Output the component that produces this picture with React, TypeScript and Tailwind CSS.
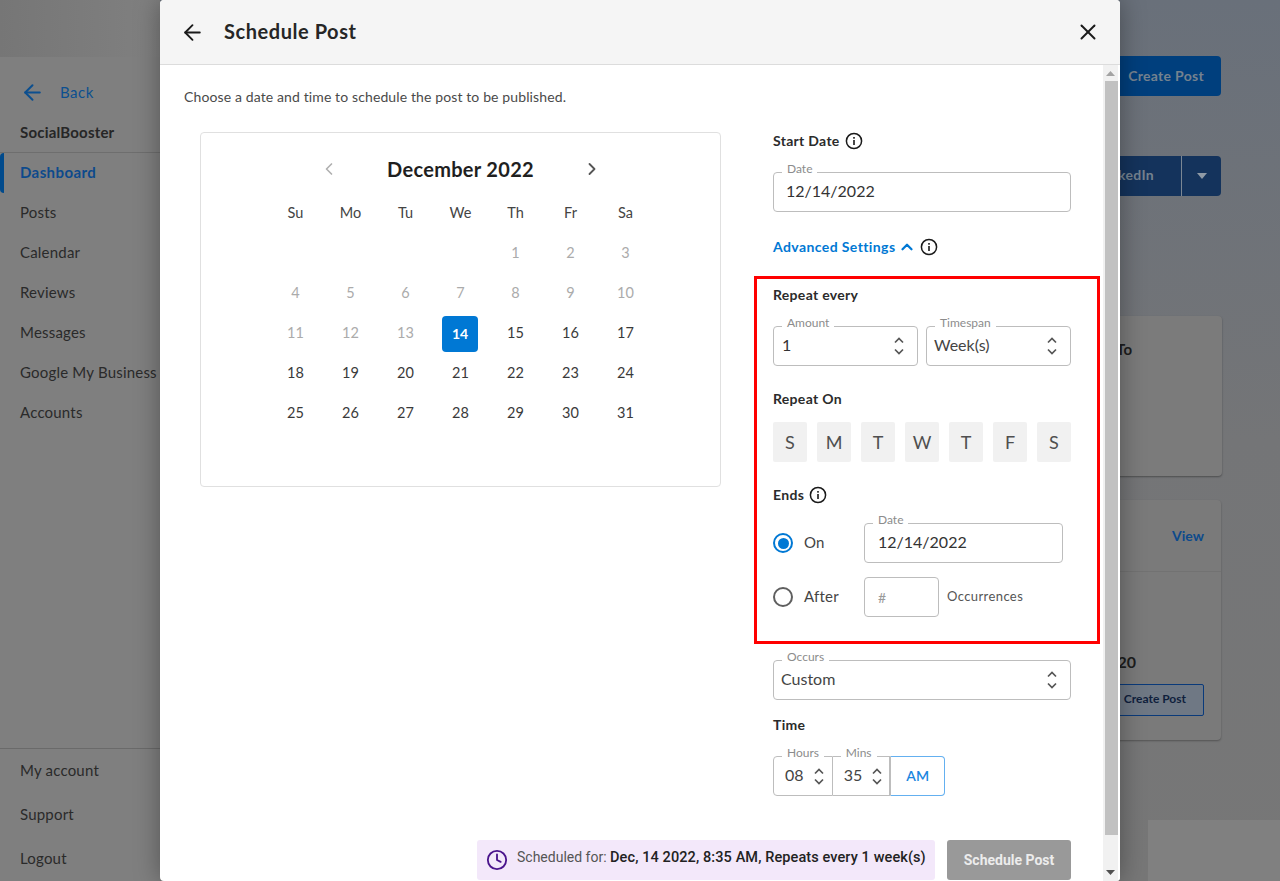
import React from "react";
import { ArrowLeft, X, ChevronLeft, ChevronRight, ChevronUp, Clock } from "lucide-react";

const nav = ["Dashboard", "Posts", "Calendar", "Reviews", "Messages", "Google My Business", "Accounts"];
const weekdays = ["Su", "Mo", "Tu", "We", "Th", "Fr", "Sa"];
const days: (number | null)[] = [null, null, null, null, 1, 2, 3, 4, 5, 6, 7, 8, 9, 10, 11, 12, 13, 14, 15, 16, 17, 18, 19, 20, 21, 22, 23, 24, 25, 26, 27, 28, 29, 30, 31];

function Info() {
  return (
    <svg width="18" height="18" viewBox="0 0 18 18" fill="none" className="shrink-0">
      <circle cx="9" cy="9" r="7.6" stroke="#1a1a1a" strokeWidth="1.5" />
      <rect x="8.2" y="8" width="1.6" height="5" fill="#1a1a1a" />
      <rect x="8.2" y="5" width="1.6" height="1.7" fill="#1a1a1a" />
    </svg>
  );
}

function UpDown({ gap = 5 }: { gap?: number }) {
  return (
    <svg width="12" height={15 + gap} viewBox={`0 0 12 ${15 + gap}`} fill="none" className="shrink-0">
      <path d="M2 6.5 L6 2.5 L10 6.5" stroke="#555" strokeWidth="1.7" />
      <path d={`M2 ${8.5 + gap} L6 ${12.5 + gap} L10 ${8.5 + gap}`} stroke="#555" strokeWidth="1.7" />
    </svg>
  );
}

function Field({ label, children, className = "" }: { label?: string; children: React.ReactNode; className?: string }) {
  return (
    <div className={`relative h-[40px] border border-[#bdbdbd] rounded-[4px] flex items-center bg-white ${className}`}>
      {label && (
        <span className="absolute left-[8px] top-[-11px] bg-white px-[5px] text-[12px] leading-[14px] text-[#8c8c8c]">{label}</span>
      )}
      <span className="contents">{children}</span>
    </div>
  );
}

function Val({ children }: { children: React.ReactNode }) {
  return <span className="pb-[2px]">{children}</span>;
}

function Heading({ text, info = false, className = "" }: { text: string; info?: boolean; className?: string }) {
  return (
    <div className={`h-[18px] flex items-center gap-[5px] text-[14px] tracking-[0.3px] font-bold text-[#2b2b2b] ${className}`}>
      <span className="pb-[2px]">{text}</span>
      {info && <Info />}
    </div>
  );
}

function Background() {
  return (
    <div className="absolute inset-0 flex bg-gradient-to-b from-[#69707a] via-[#747577] to-[#777777]">
      <aside className="w-[160px] shrink-0 h-full flex flex-col bg-[#7f7f7f] text-[15px] tracking-[0.2px] text-[#2a2a2a] overflow-hidden">
        <div className="h-[57px] bg-gradient-to-r from-[#767676] to-[#808080]" />
        <div className="mt-[25px] h-[20px] flex items-center pl-[20px] text-[#0c4f8f]">
          <ArrowLeft size={25} strokeWidth={1.9} className="mr-[15px] shrink-0" />
          <span className="tracking-[0.5px]">Back</span>
        </div>
        <div className="mt-[21px] h-[20px] pl-[20px] pb-[2px] font-bold text-[#262626] flex items-center">SocialBooster</div>
        <div className="mt-[9px] h-px bg-[#6e6e6e]" />
        {nav.map((n, i) => (
          <div key={n} className={`h-[40px] shrink-0 flex items-center pb-[2px] whitespace-nowrap ${i === 0 ? "font-bold text-[#0d4a8c] border-l-[4px] border-[#004a8c] rounded-l-[4px] pl-[16px] tracking-[0.4px]" : "pl-[20px]"}`}>
            {n}
          </div>
        ))}
        <div className="mt-auto h-px bg-[#6a6a6a]" />
        <div className="h-[132px] flex flex-col">
          {["My account", "Support", "Logout"].map((n) => (
            <div key={n} className="h-[44px] flex items-center pl-[20px] pb-[2px]">{n}</div>
          ))}
        </div>
      </aside>
      <main className="flex-1 relative flex flex-col items-end pr-[59px]">
        <div className="mt-[56px] h-[40px] w-[221px] rounded-[4px] bg-[#003f7d] flex items-center justify-end pr-[17px] pb-[2px] text-[14px] tracking-[0.3px] font-bold text-[#75828f]">Create Post</div>
        <div className="mt-[60px] h-[40px] w-[221px] rounded-[4px] bg-[#14335c] flex items-center text-[14px] tracking-[0.3px] font-bold text-[#75828f]">
          <span className="flex-1 text-right pr-[27px] pb-[3px]">LinkedIn</span>
          <span className="w-[40px] h-full border-l border-[#7b8794] flex items-center justify-center">
            <svg width="12" height="6" viewBox="0 0 12 6"><path d="M1 0 H11 L6 6 Z" fill="#8f9aa6" /></svg>
          </span>
        </div>
        <div className="mt-[120px] h-[160px] w-[222px] mr-[-1px] rounded-[4px] bg-[#7b7b7b] shadow-[0_1px_2px_rgba(0,0,0,0.35)] flex justify-end pr-[90px] pt-[22px] text-[15px] font-bold text-[#1d1d1d]">To</div>
        <div className="mt-[24px] h-[240px] w-[221px] rounded-[4px] bg-[#7a7a7a] shadow-[0_1px_2px_rgba(0,0,0,0.3)] flex flex-col">
          <div className="h-[72px] shrink-0 flex items-center justify-end pr-[17px] border-b border-[#727272] text-[14px] font-bold text-[#0d4a8c]">View</div>
          <div className="mt-[80px] h-[22px] flex items-center justify-end pr-[85px] pb-[2px] text-[16px] font-bold text-[#1d1d1d]">20</div>
          <div className="mt-[10px] mr-[17px] self-end h-[32px] w-[100px] rounded-[2px] border border-[#0a3a7a] bg-[#6f7884] flex items-center justify-end pr-[17px] pb-[2px] text-[12px] font-bold text-[#0f1f3d]">Create Post</div>
        </div>
        <div className="absolute right-0 bottom-0 w-[132px] h-[61px] bg-[#808080]" />
      </main>
    </div>
  );
}

function Calendar() {
  return (
    <div className="ml-[16px] w-[521px] h-[355px] rounded-[4px] border border-[#e0e0e0] pt-[24px]">
      <div className="w-[280px] h-[24px] mx-auto flex items-center justify-between">
        <ChevronLeft size={20} className="text-[#b0b0b0] ml-[-2px]" strokeWidth={2} />
        <span className="text-[20px] tracking-[0.3px] font-bold text-[#1f1f1f]">December 2022</span>
        <ChevronRight size={20} className="text-[#555] mr-[-2px]" strokeWidth={2.2} />
      </div>
      <div className="mt-[12px] pr-[1px] grid grid-cols-[repeat(7,55px)] justify-center text-[14.5px]">
        {weekdays.map((d) => (
          <div key={d} className="h-[40px] pl-[1px] flex items-center justify-center text-[#444]">{d}</div>
        ))}
        {days.map((d, i) => (
          <div key={i} className={`h-[40px] flex items-center justify-center text-[14.5px] ${d === 14 ? "" : "pl-[1px]"} ${d !== null && d < 14 ? "text-[#ababab]" : "text-[#3a3a3a]"}`}>
            {d === 14 ? (
              <span className="w-[36px] h-[36px] mt-[2px] pb-[2px] rounded-[4px] bg-[#0078d4] text-white text-[14px] font-bold flex items-center justify-center">14</span>
            ) : (
              d
            )}
          </div>
        ))}
      </div>
    </div>
  );
}

function Form() {
  const boxes = ["S", "M", "T", "W", "T", "F", "S"];
  return (
    <div className="ml-[52px] w-[298px] shrink-0">
      <Heading text="Start Date" info />
      <Field label="Date" className="mt-[22px] px-[12px] text-[16px] text-[#333]"><Val>12/14/2022</Val></Field>
      <div className="mt-[25px] h-[20px] flex items-center text-[14px] tracking-[0.4px] font-bold text-[#0078d4]">
        <span className="pb-[1px]">Advanced Settings</span>
        <ChevronUp size={18} strokeWidth={3} className="ml-[3px] mr-[4px]" />
        <Info />
      </div>
      <div className="mt-[19px] ml-[-19px] w-[346px] border-[3px] border-[#ff0000] pl-[16px] pt-[7px] pb-[24px]">
        <div className="w-[298px]">
          <Heading text="Repeat every" />
          <div className="mt-[22px] flex gap-[8px]">
            <Field label="Amount" className="w-[145px] pl-[8px] pr-[12px] justify-between text-[16px] text-[#333]">
              <Val>1</Val> <UpDown />
            </Field>
            <Field label="Timespan" className="w-[145px] pl-[7px] pr-[12px] justify-between text-[16px] text-[#444]">
              <Val>Week(s)</Val> <UpDown />
            </Field>
          </div>
          <Heading text="Repeat On" className="mt-[24px]" />
          <div className="mt-[14px] flex justify-between">
            {boxes.map((b, i) => (
              <div key={i} className="w-[34px] h-[40px] rounded-[2px] bg-[#f1f1f1] flex items-center justify-center text-[18px] text-[#4f4f4f]">{b}</div>
            ))}
          </div>
          <Heading text="Ends" info className="mt-[24px]" />
          <div className="mt-[19px] flex items-center">
            <span className="w-[20px] h-[20px] rounded-full border-[2px] border-[#0078d4] flex items-center justify-center">
              <span className="w-[11px] h-[11px] rounded-full bg-[#0078d4]" />
            </span>
            <span className="w-[71px] pl-[11px] pb-[2px] text-[15px] tracking-[0.2px] text-[#444]">On</span>
            <Field label="Date" className="w-[199px] px-[13px] text-[16px] text-[#333]"><Val>12/14/2022</Val></Field>
          </div>
          <div className="mt-[14px] flex items-center">
            <span className="w-[20px] h-[20px] rounded-full border-[2px] border-[#5f5f5f]" />
            <span className="w-[71px] pl-[11px] pb-[2px] text-[15px] tracking-[0.2px] text-[#444]">After</span>
            <Field className="w-[75px] px-[13px] text-[14px] text-[#9a9a9a]">#</Field>
            <span className="ml-[8px] text-[13px] tracking-[0.4px] text-[#555]">Occurrences</span>
          </div>
        </div>
      </div>
      <Field label="Occurs" className="mt-[16px] pl-[7px] pr-[12px] justify-between text-[16px] text-[#444]">
        <Val>Custom</Val> <UpDown />
      </Field>
      <Heading text="Time" className="mt-[16px]" />
      <div className="mt-[22px] flex w-[172px] text-[16px] text-[#444]">
        <Field label="Hours" className="w-[60px] rounded-r-none pl-[11px] pr-[7px] justify-between">
          <Val>08</Val> <UpDown gap={4} />
        </Field>
        <Field label="Mins" className="w-[58px] rounded-none border-l-0 pl-[11px] pr-[6px] justify-between">
          <Val>35</Val> <UpDown gap={4} />
        </Field>
        <div className="w-[55px] h-[40px] pb-[1px] border border-[#64b0f0] border-l-[#bdbdbd] rounded-r-[4px] flex items-center justify-center text-[14px] font-semibold text-[#1a86e0]">AM</div>
      </div>
    </div>
  );
}

function Scrollbar() {
  return (
    <div className="w-[17px] shrink-0 h-full bg-[#f1f1f1] flex flex-col border-r-[2px] border-white">
      <div className="h-[16px] shrink-0 flex items-center justify-center">
        <svg width="9" height="5" viewBox="0 0 9 5"><path d="M0 5 L4.5 0 L9 5 Z" fill="#a3a3a3" /></svg>
      </div>
      <div className="ml-[2px] w-[13px] flex-1 bg-[#c1c1c1]" />
      <div className="h-[46px] shrink-0 flex items-end justify-center pb-[6px]">
        <svg width="9" height="5" viewBox="0 0 9 5"><path d="M0 0 L4.5 5 L9 0 Z" fill="#505050" /></svg>
      </div>
    </div>
  );
}

export default function App() {
  return (
    <div className="relative w-[1280px] h-[881px] overflow-hidden font-[Lato,sans-serif]">
      <Background />
      <div className="absolute left-[160px] top-0 w-[960px] h-[881px] rounded-[4px] bg-white shadow-[0_0_26px_rgba(0,0,0,0.35)] flex flex-col overflow-hidden">
        <header className="h-[65px] shrink-0 bg-[#f5f5f5] border-b border-[#dcdcdc] flex items-center pl-[20px] pr-[19px]">
          <ArrowLeft size={25} strokeWidth={1.8} className="text-[#1a1a1a] shrink-0" />
          <h1 className="ml-[19px] pb-[2px] text-[20px] tracking-[0.55px] font-bold text-[#262626]">Schedule Post</h1>
          <X size={26} strokeWidth={1.8} className="ml-auto text-[#1a1a1a]" />
        </header>
        <div className="flex-1 flex min-h-0">
          <div className="w-[943px] shrink-0 pt-[23px] pl-[24px]">
            <p className="h-[18px] pb-[2px] flex items-center text-[14px] tracking-[0.12px] text-[#4a4a4a]">Choose a date and time to schedule the post to be published.</p>
            <div className="mt-[26px] flex">
              <Calendar />
              <Form />
            </div>
            <div className="mt-[44px] flex justify-end pr-[32px] gap-[12px]">
              <div className="w-[458px] h-[40px] rounded-[3px] bg-[#f3e8fa] flex items-center pl-[9px] font-[Roboto,sans-serif] text-[14px] text-[#555] whitespace-nowrap">
                <Clock size={22} strokeWidth={2} className="text-[#4a148c] mr-[9px] shrink-0" />
                <span className="pb-[5px]">
                  Scheduled for: <span className="text-[14.5px] tracking-[0.1px] font-medium text-[#222]">Dec, 14 2022, 8:35 AM, Repeats every 1 week(s)</span>
                </span>
              </div>
              <div className="w-[124px] h-[40px] rounded-[3px] bg-[#999999] flex items-center justify-center font-[Roboto,sans-serif] text-[14px] font-bold text-[#ececec]">Schedule Post</div>
            </div>
          </div>
          <Scrollbar />
        </div>
      </div>
    </div>
  );
}
